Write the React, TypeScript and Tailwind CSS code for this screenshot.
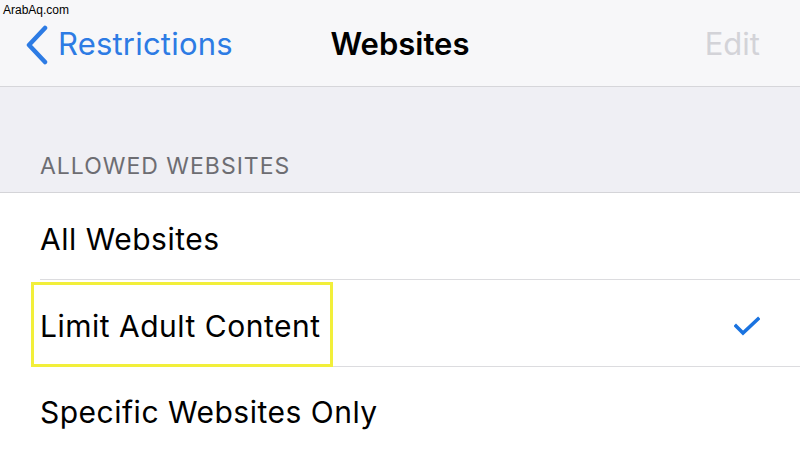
export default function App() {
  return (
    <div className="flex h-[450px] w-[800px] flex-col overflow-hidden bg-[#efeff4] font-['Inter',sans-serif]">
      <header className="relative flex h-[87px] shrink-0 items-center border-b border-[#d6d6da] bg-[#f7f7f9] pt-[3px]">
        <span className="absolute left-[3px] top-[4px] font-['Liberation_Sans',sans-serif] text-[12px] leading-none text-black">
          ArabAq.com
        </span>
        <div className="flex w-[280px] items-center pl-[25px] text-[#2d7be4]">
          <svg width="24" height="40" viewBox="0 0 24 40" fill="none">
            <path d="M20 3 L4 20 L20 37" stroke="currentColor" strokeWidth="4.5" strokeLinecap="round" strokeLinejoin="round" />
          </svg>
          <span className="ml-[9px] text-[31px] tracking-[0.2px]">Restrictions</span>
        </div>
        <div className="flex-1 text-center text-[31px] font-semibold text-black">Websites</div>
        <div className="w-[280px] pr-[40px] text-right text-[31px] text-[#d3d3d8]">Edit</div>
      </header>

      <div className="h-[106px] shrink-0 border-b border-[#d4d4d8] px-[40px] pt-[62px] text-[23px] tracking-[1px] text-[#6d6d72]">
        ALLOWED WEBSITES
      </div>

      <div className="flex-1 bg-white text-[30px] tracking-[0.5px] text-black">
        <div className="flex h-[87px] pl-[40px]">
          <div className="flex flex-1 items-center border-b border-[#dcdcdf] pt-[6px]">All Websites</div>
        </div>
        <div className="relative flex h-[87px] pl-[40px]">
          <div className="flex flex-1 items-center justify-between border-b border-[#dcdcdf] pr-[40px] pt-[6px]">
            <span>Limit Adult Content</span>
            <svg width="26" height="20" viewBox="0 0 26 20" fill="none" className="text-[#1a73e0]">
              <path d="M2 10 L9 17 L24 3" stroke="currentColor" strokeWidth="3.5" strokeLinecap="square" />
            </svg>
          </div>
          <span className="absolute left-[31px] top-[2px] h-[85px] w-[302px] border-[3px] border-[#f2ef3a]" />
        </div>
        <div className="flex h-[84px] items-center pl-[40px] pt-[6px]">Specific Websites Only</div>
      </div>
    </div>
  );
}
